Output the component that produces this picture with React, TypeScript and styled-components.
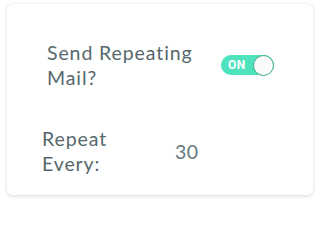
import React from "react";
import styled, { createGlobalStyle } from "styled-components";

const Global = createGlobalStyle`
  html, body { margin: 0; padding: 0; background: #ffffff; }
  body { font-family: "Lato", "Noto Sans", sans-serif; }
`;

const Page = styled.div`
  padding: 4px 7px 5px 7px;
  width: 320px;
  height: 200px;
  box-sizing: border-box;
`;

const Card = styled.div`
  height: 191px;
  box-sizing: border-box;
  background: #fff;
  border-radius: 5px;
  box-shadow: 0 1px 4px rgba(0, 0, 0, 0.14), 0 0 1px rgba(0, 0, 0, 0.08);
  display: flex;
  flex-direction: column;
  gap: 36px;
  padding-top: 36px;
`;

const Row = styled.div<{ $indent: number; $gap: number }>`
  display: flex;
  align-items: center;
  padding-left: ${(p) => p.$indent}px;
  gap: ${(p) => p.$gap}px;
  height: 50px;
`;

const Label = styled.div<{ $width: number }>`
  width: ${(p) => p.$width}px;
  font-family: "Lato", sans-serif;
  font-size: 19.5px;
  font-weight: 400;
  line-height: 25px;
  color: #56686c;
  letter-spacing: 0.9px;
`;

const Value = styled.div`
  font-family: "Lato", sans-serif;
  font-size: 19.5px;
  font-weight: 400;
  letter-spacing: 0.4px;
  color: #67787c;
`;

const Switch = styled.div`
  position: relative;
  width: 53px;
  height: 20px;
  border-radius: 10px;
  background: #4fe3bd;
  display: flex;
  align-items: center;
  box-sizing: border-box;
  padding-left: 7px;
`;

const SwitchText = styled.span`
  font-family: "Roboto", "Liberation Sans", sans-serif;
  font-weight: 700;
  font-size: 12px;
  color: #ffffff;
  letter-spacing: 0.4px;
`;

const Knob = styled.span`
  position: absolute;
  right: 0;
  top: -0.5px;
  width: 21px;
  height: 21px;
  box-sizing: border-box;
  border-radius: 50%;
  background: #fafafa;
  border: 1.5px solid #3fa98c;
`;

export default function App() {
  return (
    <>
      <Global />
      <Page>
        <Card>
          <Row $indent={40} $gap={24}>
            <Label $width={150}>Send Repeating Mail?</Label>
            <Switch>
              <SwitchText>ON</SwitchText>
              <Knob />
            </Switch>
          </Row>
          <Row $indent={35} $gap={53}>
            <Label $width={80}>Repeat Every:</Label>
            <Value>30</Value>
          </Row>
        </Card>
      </Page>
    </>
  );
}
